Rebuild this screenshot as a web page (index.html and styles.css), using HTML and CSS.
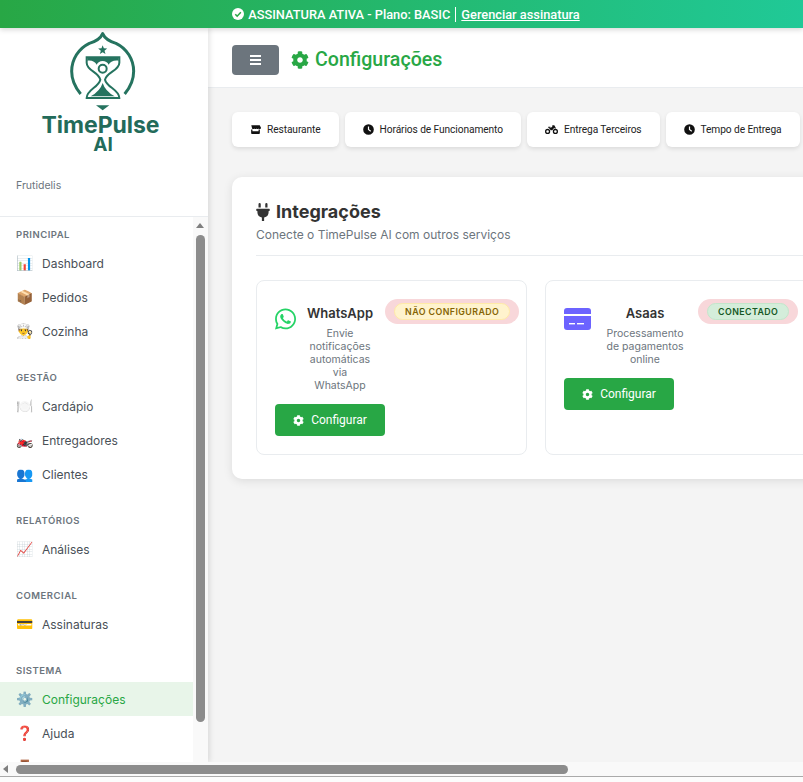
FILE: index.html
```html
<!DOCTYPE html>
<html lang="pt-BR">
<head>
<meta charset="utf-8">
<title>Configurações - TimePulse AI</title>
<link rel="stylesheet" href="styles.css">
</head>
<body>
<svg class="defs" width="0" height="0" aria-hidden="true">
  <symbol id="i-cog" viewBox="0 0 512 512"><path d="M487.4 315.7l-42.6-24.6c4.3-23.2 4.3-47 0-70.2l42.6-24.6c4.9-2.8 7.1-8.6 5.5-14-11.1-35.6-30-67.8-54.7-94.6-3.8-4.1-10-5.1-14.8-2.3L380.8 110c-17.9-15.4-38.5-27.3-60.8-35.1V25.8c0-5.6-3.9-10.5-9.4-11.7-36.7-8.2-74.3-7.8-109.2 0-5.5 1.2-9.4 6.1-9.4 11.7V75c-22.2 7.9-42.8 19.8-60.8 35.1L88.7 85.5c-4.9-2.8-11-1.9-14.8 2.3-24.7 26.7-43.6 58.9-54.7 94.6-1.7 5.4.6 11.2 5.5 14L67.3 221c-4.3 23.2-4.3 47 0 70.2l-42.6 24.6c-4.9 2.8-7.1 8.6-5.5 14 11.1 35.6 30 67.8 54.7 94.6 3.8 4.1 10 5.1 14.8 2.3l42.6-24.6c17.9 15.4 38.5 27.3 60.8 35.1v49.2c0 5.6 3.9 10.5 9.4 11.7 36.7 8.2 74.3 7.8 109.2 0 5.5-1.2 9.4-6.1 9.4-11.7v-49.2c22.2-7.9 42.8-19.8 60.8-35.1l42.6 24.6c4.9 2.8 11 1.9 14.8-2.3 24.7-26.7 43.6-58.9 54.7-94.6 1.5-5.5-.7-11.3-5.6-14.1zM256 336c-44.1 0-80-35.9-80-80s35.9-80 80-80 80 35.9 80 80-35.9 80-80 80z"/></symbol>
  <symbol id="i-clock" viewBox="0 0 512 512"><path fill-rule="evenodd" d="M256 8a248 248 0 1 0 0 496 248 248 0 0 0 0-496zm-28 112h56v124l92 66-32 46-116-84z"/></symbol>
  <symbol id="i-store" viewBox="0 0 616 512"><path d="M72 16h472l72 136c0 44-30 76-70 76-26 0-48-14-60-34-12 20-36 34-62 34s-50-14-62-34c-12 20-36 34-62 34s-50-14-62-34c-12 20-34 34-60 34-40 0-70-32-70-76z"/><path fill-rule="evenodd" d="M64 256c22 8 50 8 72 0v96h344v-96c22 8 50 8 72 0v208c0 26-20 48-48 48H112c-28 0-48-22-48-48z"/></symbol>
  <symbol id="i-bike" viewBox="0 0 640 512"><path fill-rule="evenodd" d="M128 224a128 128 0 1 0 0 256 128 128 0 0 0 0-256zm0 64a64 64 0 1 1 0 128 64 64 0 0 1 0-128zM512 224a128 128 0 1 0 0 256 128 128 0 0 0 0-256zm0 64a64 64 0 1 1 0 128 64 64 0 0 1 0-128z"/><path d="M360 48h80c12 0 20 6 26 16l74 134-54 26-30-54-98 120h-90c-10-50-40-90-88-110l-20-20h150l60-64h-10z"/><path d="M160 120h110l-30 50h-80z"/></symbol>
</svg>

<div class="banner">
  <svg class="banner-check" viewBox="0 0 24 24"><circle cx="12" cy="12" r="12" fill="#fff"/><path d="M6.5 12.5l3.8 3.8 7.4-8" fill="none" stroke="#28a745" stroke-width="3"/></svg>
  <span class="banner-text">ASSINATURA ATIVA - Plano: BASIC</span>
  <span class="banner-sep"></span>
  <a class="banner-link" href="#">Gerenciar assinatura</a>
</div>

<div class="app">
  <aside class="sidebar">
    <div class="brand">
      <div class="logo">
        <svg class="logo-mark" viewBox="0 0 270 270">
          <path class="lm-line" d="M62 198C45 178 35 155 35 130A93 93 0 0 1 88 46C106 41 121 33 128 17C135 33 150 41 168 46A93 93 0 0 1 221 130C221 155 211 178 194 198"/>
          <path class="lm-glass" d="M80 88H178V104C178 128 140 132 135 155C140 178 178 185 178 210H80C80 185 116 178 121 155C116 132 80 128 80 104Z"/>
          <path class="lm-fill" d="M82 90H176V98C160 96 150 102 146 110A20 20 0 0 0 110 110C106 102 96 96 82 98Z"/>
          <circle class="lm-ring" cx="128" cy="122" r="12"/>
          <path class="lm-fill" d="M92 205Q120 190 128 165Q136 190 164 205Z"/>
          <path class="lm-fill" d="M128 52l3.5 9 10 .5-8 6.5 3 10-8.5-5.5-8.5 5.5 3-10-8-6.5 10-.5z"/>
          <path class="lm-fill" d="M108 232H148L128 247Z"/>
        </svg>
        <div class="logo-name">TimePulse</div>
        <div class="logo-ai">AI</div>
      </div>
      <div class="brand-store">Frutidelis</div>
    </div>
    <nav class="nav">
      <div class="nav-title">Principal</div>
      <a class="nav-item" href="#"><span class="nav-ico">📊</span>Dashboard</a>
      <a class="nav-item" href="#"><span class="nav-ico">📦</span>Pedidos</a>
      <a class="nav-item" href="#"><span class="nav-ico">👨‍🍳</span>Cozinha</a>
      <div class="nav-title">Gestão</div>
      <a class="nav-item" href="#"><span class="nav-ico">🍽️</span>Cardápio</a>
      <a class="nav-item" href="#"><span class="nav-ico">🏍️</span>Entregadores</a>
      <a class="nav-item" href="#"><span class="nav-ico">👥</span>Clientes</a>
      <div class="nav-title">Relatórios</div>
      <a class="nav-item" href="#"><span class="nav-ico">📈</span>Análises</a>
      <div class="nav-title">Comercial</div>
      <a class="nav-item" href="#"><span class="nav-ico">💳</span>Assinaturas</a>
      <div class="nav-title">Sistema</div>
      <a class="nav-item active" href="#"><span class="nav-ico">⚙️</span>Configurações</a>
      <a class="nav-item" href="#"><span class="nav-ico">❓</span>Ajuda</a>
      <div class="nav-next"><span class="nav-ico">🚪</span></div>
      <div class="vscroll"><span class="vscroll-up"></span><span class="vscroll-thumb"></span></div>
    </nav>
  </aside>

  <main class="main">
    <header class="topbar">
      <button class="menu-btn" type="button" aria-label="Menu"><span></span><span></span><span></span></button>
      <h1 class="page-title"><svg class="page-ico"><use href="#i-cog"/></svg>Configurações</h1>
    </header>
    <div class="content">
      <div class="tabs">
        <a class="tab" href="#"><svg class="tab-ico"><use href="#i-store"/></svg>Restaurante</a>
        <a class="tab" href="#"><svg class="tab-ico"><use href="#i-clock"/></svg>Horários de Funcionamento</a>
        <a class="tab" href="#"><svg class="tab-ico ico-wide"><use href="#i-bike"/></svg>Entrega Terceiros</a>
        <a class="tab" href="#"><svg class="tab-ico"><use href="#i-clock"/></svg>Tempo de Entrega</a>
      </div>
      <section class="panel">
        <h2 class="panel-title">
          <svg class="plug" viewBox="0 0 384 512"><path d="M320 32a32 32 0 0 0-64 0v96h64Zm48 128H16A16 16 0 0 0 0 176v32a16 16 0 0 0 16 16H32v32A160.07 160.07 0 0 0 160 412.8V512h64V412.8A160.07 160.07 0 0 0 352 256V224h16a16 16 0 0 0 16-16V176A16 16 0 0 0 368 160ZM128 32a32 32 0 0 0-64 0v96h64Z"/></svg>
          Integrações
        </h2>
        <p class="panel-sub">Conecte o TimePulse AI com outros serviços</p>
        <div class="int-grid">
          <article class="int-card">
            <div class="int-main">
              <div class="int-head">
                <svg class="wa" viewBox="0 0 448 512"><path d="M380.9 97.1C339 55.1 283.2 32 223.9 32c-122.4 0-222 99.6-222 222 0 39.1 10.2 77.3 29.6 111L0 480l117.7-30.9c32.4 17.7 68.9 27 106.1 27h.1c122.3 0 224.1-99.6 224.1-222 0-59.3-25.2-115-67.1-157zm-157 341.6c-33.2 0-65.7-8.9-94-25.7l-6.7-4-69.8 18.3L72 359.2l-4.4-7c-18.5-29.4-28.2-63.3-28.2-98.2 0-101.7 82.8-184.5 184.6-184.5 49.3 0 95.6 19.2 130.4 54.1 34.8 34.9 56.2 81.2 56.1 130.5 0 101.8-84.9 184.6-186.6 184.6zm101.2-138.2c-5.5-2.8-32.8-16.2-37.9-18-5.1-1.9-8.8-2.8-12.5 2.8-3.7 5.6-14.3 18-17.6 21.8-3.2 3.7-6.5 4.2-12 1.4-32.6-16.3-54-29.1-75.5-66-5.7-9.8 5.7-9.1 16.3-30.3 1.8-3.7.9-6.9-.5-9.7-1.4-2.8-12.5-30.1-17.1-41.2-4.5-10.8-9.1-9.3-12.5-9.5-3.2-.2-6.9-.2-10.6-.2-3.7 0-9.7 1.4-14.8 6.9-5.1 5.6-19.4 19-19.4 46.3 0 27.3 19.9 53.7 22.6 57.4 2.8 3.7 39.1 59.7 94.8 83.8 35.2 15.2 49 16.5 66.6 13.9 10.7-1.6 32.8-13.4 37.4-26.4 4.6-13 4.6-24.1 3.2-26.4-1.3-2.5-5-3.9-10.5-6.6z"/></svg>
                <div class="int-info info-wa">
                  <h3 class="int-name">WhatsApp</h3>
                  <p class="int-desc">Envie notificações automáticas via WhatsApp</p>
                </div>
              </div>
              <a class="cfg-btn" href="#"><svg class="cfg-ico"><use href="#i-cog"/></svg>Configurar</a>
            </div>
            <div class="status status-wa"><span class="pill pill-warn">Não configurado</span></div>
          </article>
          <article class="int-card">
            <div class="int-main">
              <div class="int-head head-asaas">
                <svg class="asaas" viewBox="0 0 27 22"><rect y="0" width="27" height="22" rx="3" fill="#6c63ff"/><rect y="6" width="27" height="2" fill="#fff"/><rect x="5" y="15" width="6" height="1.4" fill="#fff"/><rect x="13" y="15" width="7" height="1.4" fill="#fff"/></svg>
                <div class="int-info info-asaas">
                  <h3 class="int-name">Asaas</h3>
                  <p class="int-desc">Processamento de pagamentos online</p>
                </div>
              </div>
              <a class="cfg-btn" href="#"><svg class="cfg-ico"><use href="#i-cog"/></svg>Configurar</a>
            </div>
            <div class="status status-as"><span class="pill pill-ok">Conectado</span></div>
          </article>
        </div>
      </section>
    </div>
  </main>
</div>

<div class="hscroll"><span class="hscroll-left"></span><span class="hscroll-thumb"></span></div>
<div class="foot"></div>
</body>
</html>
```

FILE: styles.css
```css
* { box-sizing: border-box; }
html, body { margin: 0; height: 100%; }
body {
  width: 803px;
  height: 782px;
  overflow: hidden;
  background: #fff;
  font-family: "Inter", "Noto Sans", sans-serif;
  display: flex;
  flex-direction: column;
}
a { text-decoration: none; color: inherit; }
.defs { position: absolute; }

.banner {
  flex: none;
  height: 28px;
  display: flex;
  align-items: center;
  justify-content: center;
  gap: 3px;
  padding-left: 9px;
  color: #fff;
  font: 500 12.8px "Roboto", sans-serif;
  background: linear-gradient(90deg, #28a745, #20c997);
  box-shadow: 0 2px 5px rgba(0,0,0,.15);
  position: relative;
  z-index: 3;
}
.banner-check { width: 12px; height: 12px; margin-right: 1px; }
.banner-sep { width: 1px; height: 15px; background: #fff; margin: 0 2px; }
.banner-link { text-decoration: underline; font-weight: 500; }

.app { flex: none; height: 734px; display: flex; }

.sidebar {
  flex: none;
  width: 208px;
  display: flex;
  flex-direction: column;
  background: #fff;
  box-shadow: 2px 0 5px rgba(0,0,0,.1);
  position: relative;
  z-index: 2;
}
.brand {
  flex: none;
  height: 189px;
  border-bottom: 1px solid #e9ecef;
  display: flex;
  flex-direction: column;
}
.logo {
  height: 130px;
  display: flex;
  flex-direction: column;
  align-items: center;
  color: #236b5a;
  margin-left: -2px;
}
.logo-mark { width: 90px; height: 90px; flex: none; margin-left: 4px; }
.lm-line { fill: none; stroke: #25735f; stroke-width: 9; stroke-linejoin: round; }
.lm-glass { fill: none; stroke: #25735f; stroke-width: 6; }
.lm-fill { fill: #25735f; }
.lm-ring { fill: none; stroke: #25735f; stroke-width: 6; }
.logo-name { font-size: 23px; font-weight: 700; line-height: 24px; letter-spacing: -.05px; margin: -5px 5px 0 0; }
.logo-ai { font-size: 19px; font-weight: 700; line-height: 16px; }
.brand-store {
  margin-top: 21px;
  padding-left: 16px;
  font-size: 10.5px;
  line-height: 14px;
  color: #6c757d;
}

.nav {
  flex: 1;
  min-height: 0;
  overflow: hidden;
  padding-top: 11px;
  position: relative;
}
.nav-title {
  height: 13px;
  line-height: 13px;
  margin: 23px 0 5px;
  padding-left: 16px;
  font-size: 9.5px;
  font-weight: 600;
  letter-spacing: .5px;
  text-transform: uppercase;
  color: #6c757d;
}
.nav-title:first-child { margin-top: 0; }
.nav-item, .nav-next {
  width: 193px;
  height: 34px;
  display: flex;
  align-items: center;
  padding-left: 16px;
  font-size: 12px;
  color: #495057;
}
.nav-ico { width: 26px; flex: none; font-size: 14px; line-height: 1; }
.nav-item.active { background: #e8f5e9; color: #28a745; }

.vscroll {
  position: absolute;
  top: 0;
  bottom: 0;
  left: 193px;
  width: 15px;
  background: #f9f9f9;
}
.vscroll-up {
  position: absolute;
  top: 6px;
  left: 3px;
  border: 4.5px solid transparent;
  border-top: 0;
  border-bottom: 5px solid #7f7f7f;
}
.vscroll-thumb {
  position: absolute;
  top: 18px;
  left: 3px;
  width: 9px;
  height: 487px;
  border-radius: 5px;
  background: #8c8c8c;
}

.main {
  flex: 1;
  min-width: 0;
  overflow: hidden;
  background: #f4f4f4;
}
.topbar {
  height: 60px;
  padding: 4px 24px 0;
  display: flex;
  align-items: center;
  gap: 12px;
  background: #fff;
  border-bottom: 1px solid #e9ecef;
}
.menu-btn {
  width: 47px;
  height: 30px;
  padding: 0;
  border: 0;
  border-radius: 4px;
  background: #6c757d;
  display: flex;
  flex-direction: column;
  align-items: center;
  justify-content: center;
  gap: 2px;
}
.menu-btn span { width: 11px; height: 2px; background: #fff; }
.page-title {
  margin: 0;
  display: flex;
  align-items: center;
  gap: 6px;
  font: 500 19.6px "Roboto", sans-serif;
  color: #28a745;
}
.page-ico { width: 18px; height: 18px; fill: #28a745; }

.content { width: 900px; padding: 24px 0 0 24px; }
.tabs { display: flex; gap: 6px; }
.tab {
  height: 35px;
  padding: 0 18px;
  display: flex;
  align-items: center;
  gap: 6px;
  flex: none;
  background: #fff;
  border-radius: 6px;
  box-shadow: 0 2px 4px rgba(0,0,0,.1);
  font: 400 10.2px "Roboto", sans-serif;
  letter-spacing: -.09px;
  color: #222;
}
.tab-ico { width: 11px; height: 11px; fill: #111; }
.ico-wide { width: 13px; }

.panel {
  margin-top: 30px;
  width: 800px;
  height: 302px;
  padding: 24px;
  background: #fff;
  border-radius: 10px;
  box-shadow: 0 2px 10px rgba(0,0,0,.1);
}
.panel-title {
  margin: 0;
  display: flex;
  align-items: center;
  gap: 6px;
  font-size: 18px;
  line-height: 22px;
  font-weight: 700;
  color: #333;
}
.plug { width: 14px; height: 18px; fill: #333; }
.panel-sub {
  margin: 4px 0 0;
  padding-bottom: 12px;
  border-bottom: 1px solid #e9ecef;
  font-size: 12px;
  line-height: 16px;
  color: #6c757d;
}
.int-grid {
  margin-top: 24px;
  display: grid;
  grid-template-columns: 271px 271px;
  gap: 18px;
}
.int-card {
  height: 175px;
  padding: 18px;
  display: flex;
  align-items: flex-start;
  background: #fff;
  border: 1px solid #e9ecef;
  border-radius: 8px;
}
.int-main { width: 110px; flex: none; }
.int-head { display: flex; align-items: flex-start; gap: 10px; }
.head-asaas { gap: 15px; }
.wa { width: 21px; height: 24px; margin-top: 8px; flex: none; fill: #25d366; }
.asaas { width: 27px; height: 22px; margin-top: 9px; flex: none; }
.int-info { flex: none; padding-top: 6px; text-align: center; }
.info-wa { width: 68px; }
.info-asaas { width: 78px; }
.int-name {
  margin: 0;
  font-size: 13px;
  line-height: 16px;
  font-weight: 600;
  color: #333;
}
.int-desc {
  margin: 6px 0 0;
  font-size: 10.5px;
  line-height: 13px;
  color: #6c757d;
}
.cfg-btn {
  margin-top: 12px;
  width: 110px;
  height: 32px;
  display: flex;
  align-items: center;
  justify-content: center;
  gap: 7px;
  background: #28a745;
  border-radius: 4px;
  color: #fff;
  font: 400 12px "Roboto", sans-serif;
}
.cfg-ico { width: 11px; height: 11px; fill: #fff; }
.status {
  flex: none;
  height: 25px;
  padding: 4px 9px;
  background: #f8d7da;
  border-radius: 13px;
  display: flex;
}
.status-as { margin-left: 24px; }
.pill {
  height: 17px;
  padding: 0 10px;
  border-radius: 9px;
  border: 1px solid;
  font-size: 8.8px;
  line-height: 15px;
  font-weight: 600;
  letter-spacing: .45px;
  text-transform: uppercase;
  white-space: nowrap;
}
.pill-warn { background: #fff3cd; border-color: #ffeaa7; color: #856404; }
.pill-ok { background: #d4edda; border-color: #c3e6cb; color: #155724; }

.hscroll {
  flex: none;
  height: 14px;
  position: relative;
  background: #f9f9f9;
  z-index: 4;
}
.hscroll-left {
  position: absolute;
  top: 3px;
  left: 3px;
  border: 4.5px solid transparent;
  border-left: 0;
  border-right: 5px solid #7f7f7f;
}
.hscroll-thumb {
  position: absolute;
  top: 3px;
  left: 16px;
  width: 552px;
  height: 9px;
  border-radius: 5px;
  background: #8c8c8c;
}
.foot {
  flex: 1;
  background: #fcfcfc;
  border-top: 1px solid #aaa;
}
```
